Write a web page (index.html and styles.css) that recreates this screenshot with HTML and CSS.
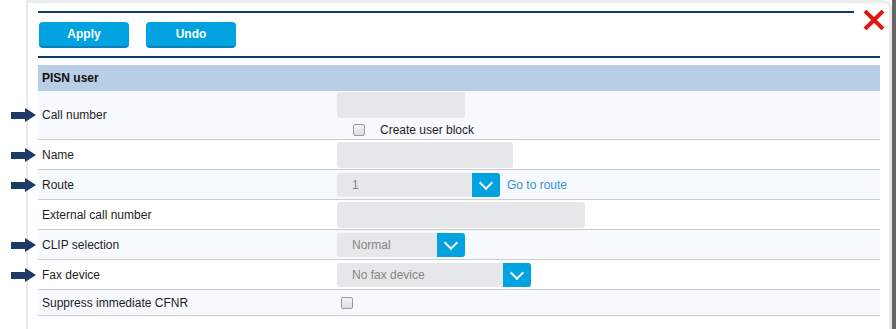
FILE: index.html
```html
<!DOCTYPE html>
<html lang="en">
<head>
    <meta charset="UTF-8">
    <title>PISN user</title>
    <link rel="stylesheet" href="styles.css">
</head>
<body>
    <div class="dialog">
        <div class="panel">
            <button class="close" title="Close">
                <svg viewBox="0 0 22 20" width="22" height="20">
                    <path d="M2 1 L20 19 M20 1 L2 19" stroke="#e0170f" stroke-width="4" fill="none"/>
                </svg>
            </button>

            <div class="toolbar">
                <button class="btn">Apply</button>
                <button class="btn">Undo</button>
            </div>

            <div class="section-head">PISN user</div>

            <div class="row alt tall">
                <div class="label marked">Call number</div>
                <div class="field stack">
                    <input class="text w-sm" type="text">
                    <label class="check-line">
                        <input class="check" type="checkbox">
                        <span>Create user block</span>
                    </label>
                </div>
            </div>

            <div class="row">
                <div class="label marked">Name</div>
                <div class="field"><input class="text w-md" type="text"></div>
            </div>

            <div class="row alt">
                <div class="label marked">Route</div>
                <div class="field">
                    <div class="select w-route"><span>1</span><i class="drop"></i></div>
                    <a class="link" href="#">Go to route</a>
                </div>
            </div>

            <div class="row">
                <div class="label">External call number</div>
                <div class="field"><input class="text w-lg" type="text"></div>
            </div>

            <div class="row alt">
                <div class="label marked">CLIP selection</div>
                <div class="field">
                    <div class="select w-sm"><span>Normal</span><i class="drop"></i></div>
                </div>
            </div>

            <div class="row">
                <div class="label marked">Fax device</div>
                <div class="field">
                    <div class="select w-fax"><span>No fax device</span><i class="drop"></i></div>
                </div>
            </div>

            <div class="row alt short">
                <div class="label">Suppress immediate CFNR</div>
                <div class="field"><input class="check solo" type="checkbox"></div>
            </div>
        </div>
    </div>
</body>
</html>
```

FILE: styles.css
```css
* {
    margin: 0;
    padding: 0;
    box-sizing: border-box;
}

body {
    font-family: "Liberation Sans", Arial, sans-serif;
    font-size: 12px;
    color: #1e1e1e;
    background: #fff;
    height: 329px;
    overflow: hidden;
}

.dialog {
    margin-left: 26px;
    height: 329px;
    border-right: 4px solid #666;
}

.panel {
    position: relative;
    height: 100%;
    background: #fff;
    border-top: 3px solid #ececec;
    border-left: 2px solid #e8e8e8;
    border-right: 3px solid #ececec;
    border-top-right-radius: 8px;
    padding: 8px 9px 0 10px;
}

.close {
    position: absolute;
    top: 7px;
    right: 4px;
    border: none;
    background: none;
    cursor: pointer;
    line-height: 0;
}

.toolbar {
    display: flex;
    gap: 17px;
    margin-right: 26px;
    border-top: 2px solid #0b3d6b;
    padding: 9px 0 8px 1px;
    position: relative;
}

.toolbar::after {
    content: "";
    position: absolute;
    left: 0;
    bottom: -2px;
    width: calc(100% + 26px);
    border-top: 2px solid #0b3d6b;
}

.btn {
    width: 90px;
    height: 26px;
    border: none;
    border-bottom: 2px solid #0a82b8;
    border-radius: 4px;
    background: #00a2df;
    color: #fff;
    font-family: inherit;
    font-size: 12px;
    font-weight: bold;
    cursor: pointer;
}

.section-head {
    margin-top: 9px;
    height: 26px;
    line-height: 26px;
    padding-left: 4px;
    background: #b8cee6;
    font-weight: bold;
    color: #111;
}

.row {
    display: flex;
    align-items: center;
    min-height: 30px;
    border-bottom: 1px solid #cbcbcb;
    position: relative;
}

.row.alt {
    background: #f6f9fe;
}

.row.tall {
    min-height: 49px;
}

.row.short {
    min-height: 26px;
}

.label {
    width: 299px;
    padding-left: 4px;
    flex-shrink: 0;
}

/* arrow marker for required fields */
.label.marked::before {
    content: "";
    position: absolute;
    left: -27px;
    top: 50%;
    margin-top: -3px;
    width: 15px;
    height: 7px;
    background: #1d3a66;
}

.label.marked::after {
    content: "";
    position: absolute;
    left: -13px;
    top: 50%;
    margin-top: -7px;
    border-left: 11px solid #1d3a66;
    border-top: 7px solid transparent;
    border-bottom: 7px solid transparent;
}

.field {
    display: flex;
    align-items: center;
}

.field.stack {
    flex-direction: column;
    align-items: flex-start;
    align-self: flex-start;
    padding-top: 1px;
}

.text {
    height: 26px;
    border: none;
    border-radius: 3px;
    background: #e6e7e8;
    font-family: inherit;
}

.w-sm { width: 128px; }
.w-md { width: 176px; }
.w-lg { width: 248px; }
.w-route { width: 163px; }
.w-fax { width: 194px; }

.select {
    display: flex;
    align-items: center;
    justify-content: space-between;
    height: 24px;
    border-radius: 3px;
    background: #e6e7e8;
    color: #858585;
    padding-left: 15px;
    overflow: hidden;
}

.drop {
    width: 28px;
    height: 24px;
    background: #00a2df;
    position: relative;
}

.drop::after {
    content: "";
    position: absolute;
    left: 9px;
    top: 5px;
    width: 8px;
    height: 8px;
    border-right: 2px solid #fff;
    border-bottom: 2px solid #fff;
    transform: rotate(45deg);
}

.link {
    margin-left: 7px;
    color: #3b8fd5;
    text-decoration: none;
}

.check-line {
    display: flex;
    align-items: center;
    margin-top: 5px;
    padding-left: 16px;
    gap: 15px;
}

.check {
    appearance: none;
    width: 12px;
    height: 12px;
    border: 1px solid #9a9a9a;
    border-radius: 2px;
    background: linear-gradient(#f4f4f4, #dcdcdc);
}

.check.solo {
    margin-left: 4px;
}
```
